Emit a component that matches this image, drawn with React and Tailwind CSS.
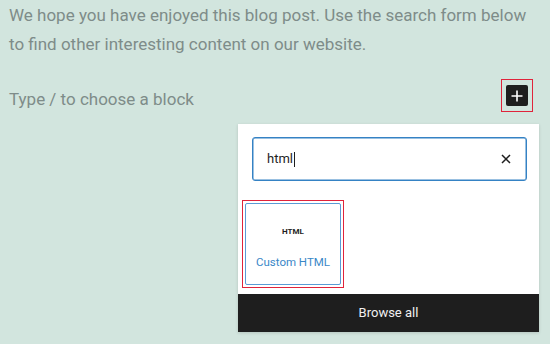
import React from 'react';

// Block inserter popover over a paragraph in the editor
function PlusButton() {
    return (
        <div className="w-[32px] h-[33px] border border-[#e0233b] flex items-center justify-center">
            <div className="w-[22px] h-[21px] rounded-[2px] bg-[#1e1e1e] flex items-center justify-center">
                <svg width="14" height="14" viewBox="0 0 14 14">
                    <path d="M7 1.5v11M1.5 7h11" stroke="#fff" strokeWidth="1.6" />
                </svg>
            </div>
        </div>
    );
}

export default function App() {
    return (
        <div className="w-[550px] h-[344px] overflow-hidden bg-[#d2e5de] font-['Roboto',sans-serif]">
            <p className="pl-[9px] pr-[20px] pt-[1px] text-[17px] leading-[29px] text-[#7e8c89]">
                We hope you have enjoyed this blog post. Use the search form below to find other interesting content on our website.
            </p>

            <div className="flex items-start justify-between pl-[9px] pr-[17px] mt-[20px]">
                <span className="mt-[6px] text-[17px] leading-[29px] text-[#7e8c89]">Type / to choose a block</span>
                <PlusButton />
            </div>

            <div className="ml-[238px] mt-[10px] w-[301px] bg-white shadow-[0_1px_3px_rgba(0,0,0,0.15)] flex flex-col">
                <div className="pl-[14px] pr-[12px] pt-[13px]">
                    <div className="h-[44px] border border-[#3582c4] rounded-[3px] flex items-center justify-between pl-[14px] pr-[14px] shadow-[inset_0_0_0_0.5px_#3582c4]">
                        <span className="text-[13px] text-[#1e1e1e] flex items-center">
                            html<span className="inline-block w-px h-[15px] bg-[#1e1e1e] ml-[1px]"></span>
                        </span>
                        <svg width="12" height="12" viewBox="0 0 12 12">
                            <path d="M2 2l8 8M10 2l-8 8" stroke="#1e1e1e" strokeWidth="1.5" />
                        </svg>
                    </div>
                </div>

                <div className="pl-[4px] pt-[19px] pb-[6px]">
                    <div className="w-[102px] h-[88px] border border-[#e0233b] p-[2px]">
                        <div className="h-full border border-[#5a9bd5] rounded-[2px] flex flex-col items-center">
                            <span className="mt-[22px] text-[8px] font-bold text-[#1e1e1e]">HTML</span>
                            <span className="mt-[16px] text-[11.5px] text-[#3a87c7]">Custom HTML</span>
                        </div>
                    </div>
                </div>

                <div className="h-[38px] bg-[#1e1e1e] flex items-center justify-center text-[13px] text-[#f0f0f0]">
                    Browse all
                </div>
            </div>
        </div>
    );
}
